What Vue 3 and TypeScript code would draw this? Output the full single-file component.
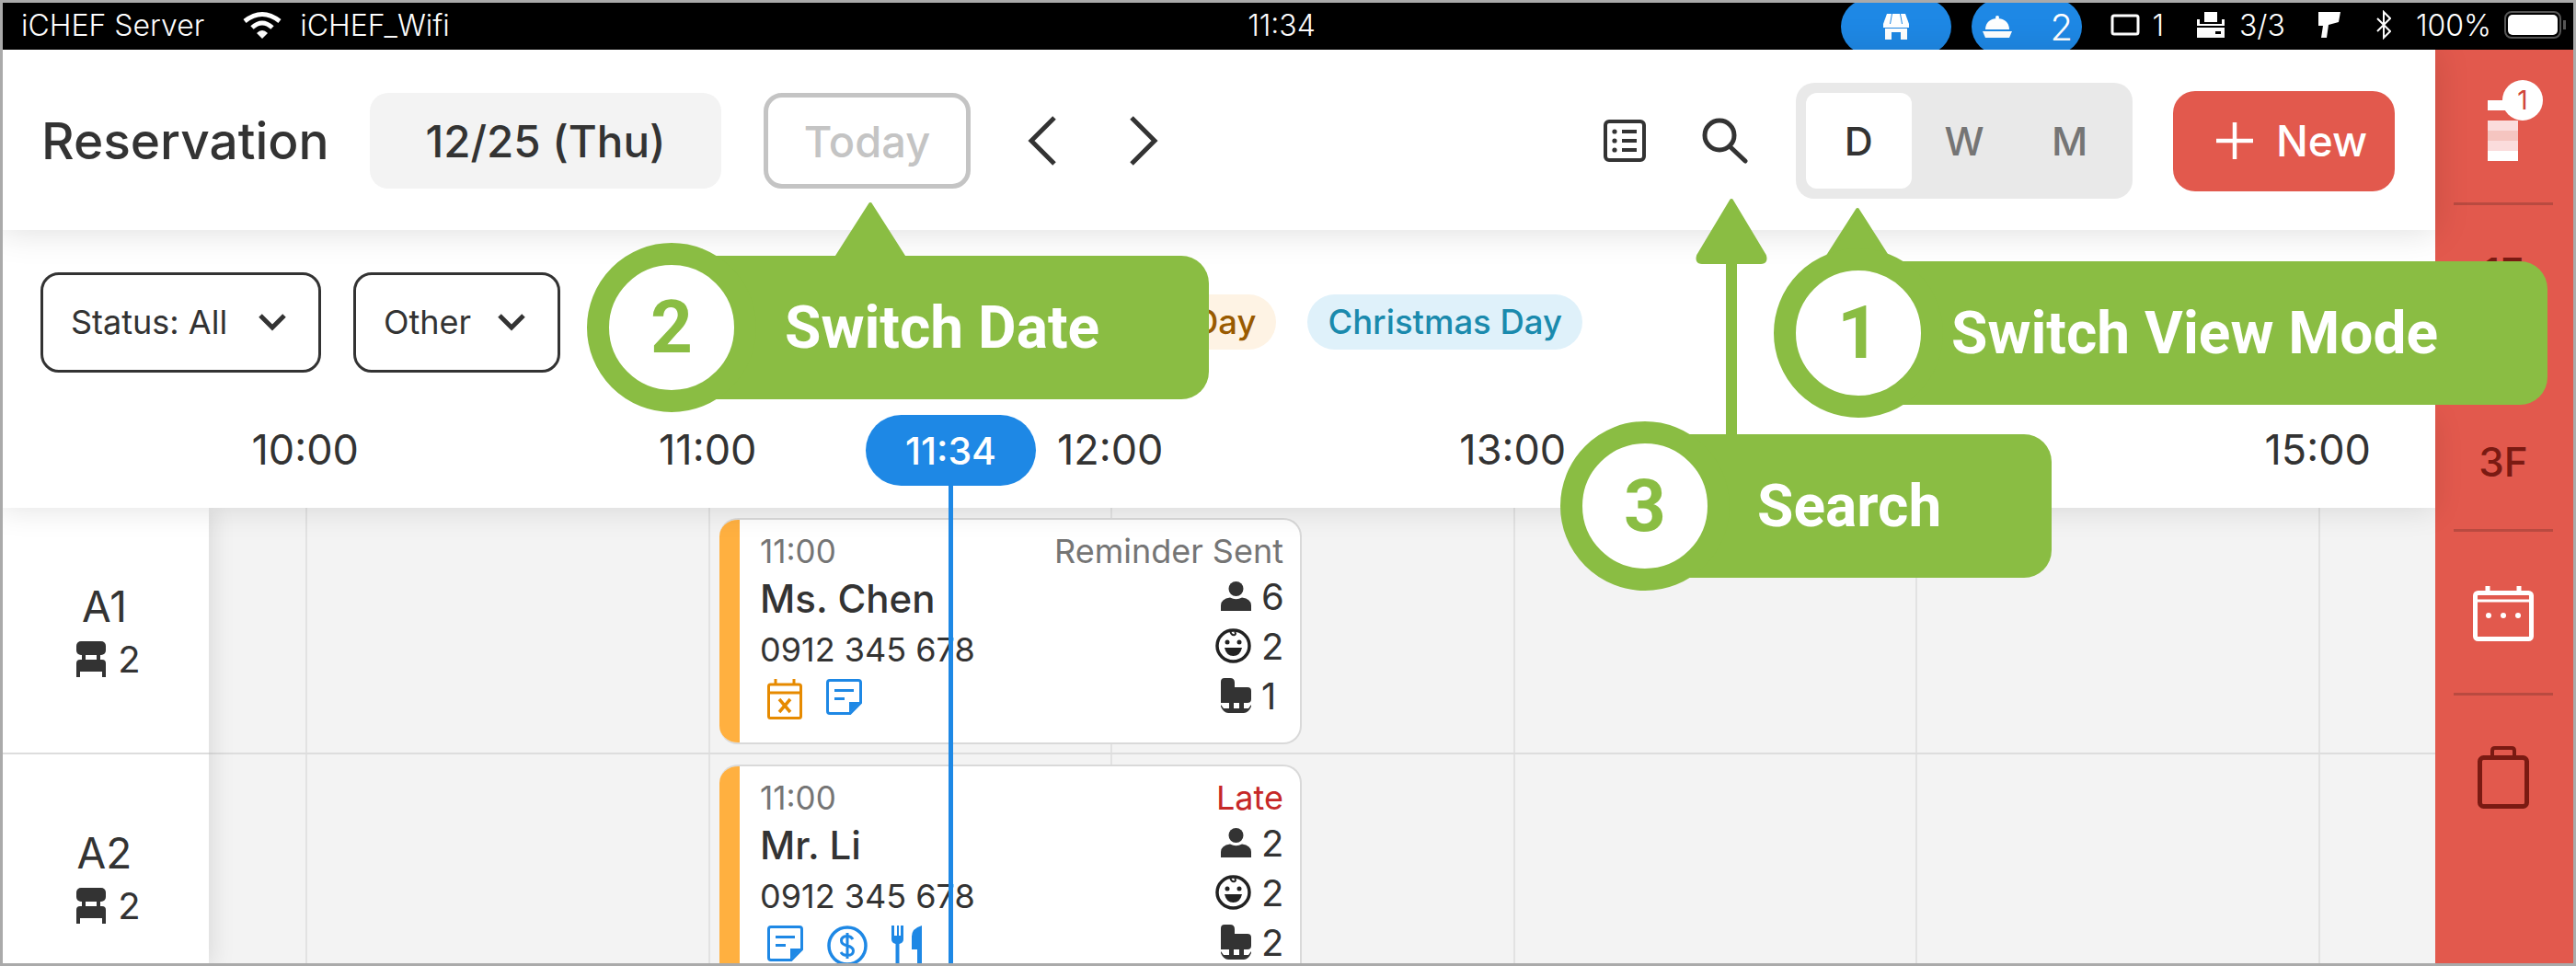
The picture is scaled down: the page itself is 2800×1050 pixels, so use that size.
<template>
  <div class="device">
    <div class="status-bar">
      <div class="status-left">
        <span>iCHEF Server</span>
        <svg class="wifi" width="44" height="30" viewBox="0 0 44 30">
          <path d="M3 11 Q22 -4 41 11" fill="none" stroke="#fff" stroke-width="5" />
          <path d="M11 18 Q22 8 33 18" fill="none" stroke="#fff" stroke-width="5" />
          <path d="M16 24 Q22 18 28 24 L22 30 Z" fill="#fff" />
        </svg>
        <span>iCHEF_Wifi</span>
      </div>
      <span class="status-time">11:34</span>
      <div class="status-right">
        <div class="status-pill store-pill">
          <svg width="28" height="28" viewBox="0 0 28 28" fill="#fff">
            <path d="M4 0H24L28 11H0Z" />
            <rect x="0" y="11" width="28" height="4" />
            <path d="M2 16H26V28H19V20H9V28H2Z" />
            <path d="M9 0H10L8 11H7ZM18 0H19L21 11H20Z" fill="#1e88e5" />
          </svg>
        </div>
        <div class="status-pill bell-pill">
          <svg width="34" height="24" viewBox="0 0 34 24" fill="#fff">
            <circle cx="17" cy="2" r="2" />
            <path d="M4 15C4 7 10 3 17 3S30 7 30 15Z" />
            <path d="M1 17H33L30 24H4Z" />
          </svg>
          <span class="bell-count">2</span>
        </div>
        <svg class="tablet" width="32" height="24" viewBox="0 0 32 24">
          <rect x="2" y="2" width="28" height="20" rx="2" fill="none" stroke="#fff" stroke-width="3" />
        </svg>
        <span class="tablet-count">1</span>
        <svg class="printer" width="30" height="28" viewBox="0 0 30 28" fill="#fff">
          <rect x="8" y="0" width="14" height="11" />
          <path d="M0 8H3V13H27V8H30V15H0Z" />
          <path d="M0 17H30V28H0ZM20 21V24H26V21Z" fill-rule="evenodd" />
        </svg>
        <span class="printer-count">3/3</span>
        <svg class="scanner" width="26" height="28" viewBox="0 0 26 28" fill="#fff">
          <path d="M2 0H26L24 11L13 14L11 28H5L7 15H2Z" />
        </svg>
        <svg class="bluetooth" width="16" height="32" viewBox="0 0 16 32">
          <path d="M1 9L15 23L8 30V2L15 9L1 23" fill="none" stroke="#fff" stroke-width="2" />
        </svg>
        <span class="battery-pct">100%</span>
        <div class="battery"><div class="battery-fill"></div></div>
        <div class="battery-tip"></div>
      </div>
    </div>

    <div class="body">
      <div class="main">
        <header class="top-bar">
          <h1 class="title">Reservation</h1>
          <div class="date-pill">12/25 (Thu)</div>
          <div class="today-btn">Today</div>
          <svg class="chev chev-prev" width="32" height="54" viewBox="0 0 32 54">
            <path d="M29 2L4 27L29 52" fill="none" stroke="#333" stroke-width="5" />
          </svg>
          <svg class="chev chev-next" width="32" height="54" viewBox="0 0 32 54">
            <path d="M3 2L28 27L3 52" fill="none" stroke="#333" stroke-width="5" />
          </svg>
          <div class="top-actions">
            <svg width="46" height="46" viewBox="0 0 46 46">
              <rect x="2" y="2" width="42" height="42" rx="4" fill="none" stroke="#333" stroke-width="4" />
              <g fill="#333">
                <circle cx="12" cy="13" r="2.6" /><rect x="20" y="11" width="16" height="4" />
                <circle cx="12" cy="23" r="2.6" /><rect x="20" y="21" width="16" height="4" />
                <circle cx="12" cy="33" r="2.6" /><rect x="20" y="31" width="16" height="4" />
              </g>
            </svg>
            <svg class="search" width="50" height="50" viewBox="0 0 50 50">
              <circle cx="19" cy="19" r="16" fill="none" stroke="#333" stroke-width="5" />
              <path d="M30 31L47 47" stroke="#333" stroke-width="5" stroke-linecap="round" />
            </svg>
            <div class="segment">
              <div class="seg-item active">D</div>
              <div class="seg-item">W</div>
              <div class="seg-item">M</div>
            </div>
            <div class="new-btn">
              <svg width="40" height="40" viewBox="0 0 40 40">
                <path d="M20 0V40M0 20H40" stroke="#fff" stroke-width="4.5" />
              </svg>
              <span>New</span>
            </div>
          </div>
        </header>

        <div class="filter-row">
          <div class="filter filter-status">
            <span>Status: All</span>
            <svg width="32" height="20" viewBox="0 0 32 20">
              <path d="M3 3L16 16L29 3" fill="none" stroke="#333" stroke-width="5" />
            </svg>
          </div>
          <div class="filter filter-other">
            <span>Other</span>
            <svg width="32" height="20" viewBox="0 0 32 20">
              <path d="M3 3L16 16L29 3" fill="none" stroke="#333" stroke-width="5" />
            </svg>
          </div>
          <div class="holidays">
            <span class="holiday holiday-orange">Constitution Day</span>
            <span class="holiday holiday-blue">Christmas Day</span>
          </div>
        </div>

        <div class="time-row">
          <span v-for="h in hours" :key="h" class="time-label">{{ h }}</span>
        </div>

        <div class="board">
          <div class="tables">
            <div v-for="t in tables" :key="t" class="table-cell">
              <div class="table-name">{{ t }}</div>
              <div class="table-seats">
                <svg width="32" height="39" viewBox="0 0 32 39" fill="#333">
                  <rect x="0" y="0" width="32" height="15" rx="5" />
                  <rect x="6" y="15" width="4" height="6" />
                  <rect x="22" y="15" width="4" height="6" />
                  <path d="M4 20H28Q32 20 32 24V39H28V33H4V39H0V24Q0 20 4 20Z" />
                </svg>
                <span>2</span>
              </div>
            </div>
          </div>
          <div class="slots">
            <div v-for="b in bookings" :key="b.name" class="slot-row">
              <div class="slot-first"></div>
              <div v-for="n in 6" :key="n" class="slot"></div>
              <div class="card">
                <div class="card-stripe"></div>
                <div class="card-left">
                  <div class="card-time">11:00</div>
                  <div class="card-name">{{ b.name }}</div>
                  <div class="card-phone">0912 345 678</div>
                  <div class="card-icons">
                    <template v-for="ic in b.icons" :key="ic">
                      <svg v-if="ic === 'cancel'" width="38" height="44" viewBox="0 0 38 44">
                        <path d="M9 0V6M29 0V6" stroke="#e68a00" stroke-width="3" />
                        <rect x="1.5" y="6" width="35" height="36.5" rx="2" fill="none" stroke="#e68a00" stroke-width="3" />
                        <path d="M2 15H36" stroke="#e68a00" stroke-width="3" />
                        <path d="M13 22L25 36M25 22L13 36" stroke="#e68a00" stroke-width="3.5" />
                      </svg>
                      <svg v-else-if="ic === 'note'" width="39" height="39" viewBox="0 0 39 39">
                        <path d="M4 1.5H35Q37.5 1.5 37.5 4V26L26 37.5H4Q1.5 37.5 1.5 35V4Q1.5 1.5 4 1.5Z" fill="none" stroke="#1e88e5" stroke-width="3" />
                        <path d="M9 11H30V14H9ZM9 20H20V23H9Z" fill="#1e88e5" />
                        <path d="M37 25L25 37V25Z" fill="#1e88e5" />
                      </svg>
                      <svg v-else-if="ic === 'paid'" width="44" height="44" viewBox="0 0 44 44">
                        <circle cx="22" cy="22" r="20" fill="none" stroke="#1e88e5" stroke-width="3.5" />
                        <path d="M28 15Q26 11.5 22 11.5Q15.5 11.5 15.5 16.5Q15.5 20.5 22 22Q28.5 23.5 28.5 27.5Q28.5 32.5 22 32.5Q17 32.5 15 29M22 8V36" fill="none" stroke="#1e88e5" stroke-width="3" />
                      </svg>
                      <svg v-else width="33" height="44" viewBox="0 0 33 44" fill="#1e88e5">
                        <path d="M0 0H3V11H6V0H8V11H10V0H13V15Q13 19 8.5 20V44H4.5V20Q0 19 0 15Z" />
                        <path d="M33 0V44H28V26H22V12Q22 3 33 0Z" />
                      </svg>
                    </template>
                  </div>
                </div>
                <div class="card-right">
                  <div class="card-status" :class="{ late: b.late }">{{ b.status }}</div>
                  <div class="count-row">
                    <svg width="33" height="32" viewBox="0 0 33 32" fill="#333">
                      <circle cx="16.5" cy="8" r="8" />
                      <path d="M0 32V26Q0 19 10 17.5Q16.5 21 23 17.5Q33 19 33 26V32Z" />
                    </svg>
                    <span class="count-num">{{ b.adults }}</span>
                  </div>
                  <div class="count-row">
                    <svg width="39" height="38" viewBox="0 0 39 38">
                      <ellipse cx="19.5" cy="19" rx="17.5" ry="17" fill="none" stroke="#222" stroke-width="3.5" />
                      <path d="M16 2Q17 8 21 7Q23 6 21 4" fill="none" stroke="#222" stroke-width="2" />
                      <circle cx="13" cy="15" r="2.5" fill="#222" />
                      <circle cx="26" cy="15" r="2.5" fill="#222" />
                      <path d="M10 21H29Q27 30 19.5 30T10 21Z" fill="#222" />
                    </svg>
                    <span class="count-num">{{ b.kids }}</span>
                  </div>
                  <div class="count-row">
                    <svg width="33" height="38" viewBox="0 0 33 38" fill="#333">
                      <path d="M0 4Q0 0 4 0H10Q15 0 15 5V10H29Q33 10 33 14V23Q33 27 29 27H0Z" />
                      <path d="M9 27H14V33H20V27H25V33H30L33 29V31Q30 38 25 38H8Q3 38 0 31V29L3 33H9Z" />
                    </svg>
                    <span class="count-num">{{ b.chairs }}</span>
                  </div>
                </div>
              </div>
            </div>
          </div>
        </div>
      </div>

      <aside class="side">
        <div class="side-top">
          <div class="stack">
            <div class="stack-bar"></div>
            <div class="stack-block">
              <i class="s1"></i><i class="s2"></i><i class="s1"></i><i class="s3"></i>
            </div>
            <div class="stack-badge">1</div>
          </div>
        </div>
        <div class="side-floors">
          <div v-for="f in floors" :key="f" class="floor">{{ f }}</div>
        </div>
        <div class="side-item side-calendar">
          <svg width="66" height="60" viewBox="0 0 66 60">
            <path d="M16 0V8M50 0V8" stroke="#fff" stroke-width="5" />
            <rect x="2.5" y="7.5" width="61" height="50" rx="3" fill="none" stroke="#fff" stroke-width="5" />
            <path d="M3 16H63" stroke="#fff" stroke-width="3" />
            <circle cx="17" cy="32" r="3" fill="#fff" />
            <circle cx="33" cy="32" r="3" fill="#fff" />
            <circle cx="49" cy="32" r="3" fill="#fff" />
          </svg>
        </div>
        <div class="side-item side-case">
          <svg width="56" height="68" viewBox="0 0 56 68">
            <path d="M16 12V5Q16 2 19 2H37Q40 2 40 5V12" fill="none" stroke="#7a1a12" stroke-width="4" />
            <rect x="2.5" y="12.5" width="51" height="53" rx="4" fill="none" stroke="#7a1a12" stroke-width="5" />
          </svg>
        </div>
      </aside>
    </div>

    <!-- current time marker -->
    <div class="now-line"></div>
    <div class="now-pill">11:34</div>

    <!-- tutorial callouts -->
    <svg class="pointer pointer-date" width="82" height="66" viewBox="0 0 82 66">
      <path d="M41 6L78 64H4Z" fill="#8abd43" stroke="#8abd43" stroke-width="4" stroke-linejoin="round" />
    </svg>
    <svg class="pointer pointer-view" width="82" height="66" viewBox="0 0 82 66">
      <path d="M41 6L78 64H4Z" fill="#8abd43" stroke="#8abd43" stroke-width="4" stroke-linejoin="round" />
    </svg>
    <svg class="pointer pointer-search" width="84" height="260" viewBox="0 0 84 260">
      <path d="M42 6L78 66Q80 73 74 73H10Q4 73 6 66Z" fill="#8abd43" stroke="#8abd43" stroke-width="4" stroke-linejoin="round" />
      <rect x="36" y="70" width="12" height="190" fill="#8abd43" />
    </svg>
    <div class="callout callout-date">
      <div class="callout-num">2</div>
      <span class="callout-text">Switch Date</span>
    </div>
    <div class="callout callout-view">
      <div class="callout-num">1</div>
      <span class="callout-text">Switch View Mode</span>
    </div>
    <div class="callout callout-search">
      <div class="callout-num">3</div>
      <span class="callout-text">Search</span>
    </div>
  </div>
</template>

<script setup lang="ts">
interface Booking {
  name: string
  status: string
  late: boolean
  adults: number
  kids: number
  chairs: number
  icons: string[]
}

const hours: string[] = ['10:00', '11:00', '12:00', '13:00', '14:00', '15:00']
const tables: string[] = ['A1', 'A2']
const floors: string[] = ['1F', '2F', '3F']

const bookings: Booking[] = [
  { name: 'Ms. Chen', status: 'Reminder Sent', late: false, adults: 6, kids: 2, chairs: 1, icons: ['cancel', 'note'] },
  { name: 'Mr. Li', status: 'Late', late: true, adults: 2, kids: 2, chairs: 2, icons: ['note', 'paid', 'meal'] }
]
</script>

<style>
html,
body {
  margin: 0;
  background: #fff;
}
</style>

<style scoped>
.device {
  position: relative;
  width: 2800px;
  height: 1050px;
  overflow: hidden;
  display: flex;
  flex-direction: column;
  background: #fff;
  color: #333;
  font-family: Inter, Roboto, sans-serif;
}
.device::after {
  content: "";
  position: absolute;
  inset: 0;
  border: 3px solid #aaa;
  pointer-events: none;
  z-index: 20;
}

.status-bar {
  flex: 0 0 54px;
  background: #000;
  color: #fff;
  display: grid;
  grid-template-columns: 1fr auto 1fr;
  align-items: center;
  font-size: 32px;
  font-weight: 300;
  padding: 0 11px 0 23px;
  overflow: hidden;
}
.status-left {
  display: flex;
  align-items: center;
}
.wifi {
  margin: 0 19px 0 41px;
}
.status-time {
  margin-right: 26px;
}
.status-right {
  display: flex;
  align-items: center;
  justify-content: flex-end;
  height: 54px;
}
.status-pill {
  width: 120px;
  height: 60px;
  margin-top: 4px;
  background: #1e88e5;
  border-radius: 30px;
  display: flex;
  align-items: center;
  box-sizing: border-box;
}
.store-pill {
  justify-content: center;
}
.bell-pill {
  margin-left: 22px;
  padding-left: 11px;
}
.bell-count {
  font-size: 40px;
  font-weight: 300;
  margin-left: 40px;
}
.tablet {
  margin-left: 31px;
}
.tablet-count {
  margin-left: 13px;
}
.printer {
  margin-left: 36px;
}
.printer-count {
  margin-left: 16px;
}
.scanner {
  margin-left: 34px;
}
.bluetooth {
  margin-left: 39px;
}
.battery-pct {
  margin-left: 27px;
}
.battery {
  width: 62px;
  height: 30px;
  margin-left: 14px;
  border: 2px solid #555;
  border-radius: 8px;
  padding: 2px;
  box-sizing: border-box;
}
.battery-fill {
  height: 100%;
  background: #fff;
  border-radius: 5px;
}
.battery-tip {
  width: 3px;
  height: 10px;
  margin-left: 2px;
  background: #555;
}

.body {
  flex: 1;
  min-height: 0;
  display: flex;
}
.main {
  width: 2647px;
  display: flex;
  flex-direction: column;
  min-height: 0;
}

.top-bar {
  flex: 0 0 196px;
  box-sizing: border-box;
  display: flex;
  align-items: center;
  padding: 2px 44px 0 45px;
  background: #fff;
  box-shadow: 0 2px 36px rgba(0, 0, 0, 0.13);
  position: relative;
  z-index: 4;
}
.title {
  margin: 0;
  width: 357px;
  font-size: 55px;
  font-weight: 500;
  color: #333;
}
.date-pill {
  width: 382px;
  height: 104px;
  background: #f3f3f3;
  border-radius: 20px;
  display: flex;
  align-items: center;
  justify-content: center;
  font-size: 47.5px;
  font-weight: 500;
}
.today-btn {
  width: 225px;
  height: 104px;
  margin-left: 46px;
  box-sizing: border-box;
  border: 5px solid #c4c4c4;
  border-radius: 20px;
  display: flex;
  align-items: center;
  justify-content: center;
  font-size: 47px;
  font-weight: 500;
  color: #c4c4c4;
}
.chev-prev {
  margin-left: 62px;
}
.chev-next {
  margin-left: 78px;
}
.top-actions {
  margin-left: auto;
  display: flex;
  align-items: center;
}
.search {
  margin-left: 61px;
}
.segment {
  margin-left: 52px;
  width: 366px;
  height: 126px;
  box-sizing: border-box;
  padding: 11px;
  background: #e9e9e9;
  border-radius: 20px;
  display: flex;
}
.seg-item {
  flex: 1;
  display: flex;
  align-items: center;
  justify-content: center;
  font-size: 43px;
  font-weight: 500;
  color: #757575;
  border-radius: 12px;
}
.seg-item.active {
  background: #fff;
  color: #333;
}
.new-btn {
  margin-left: 44px;
  width: 241px;
  height: 109px;
  box-sizing: border-box;
  padding-left: 47px;
  background: #e2594d;
  border-radius: 24px;
  display: flex;
  align-items: center;
  gap: 25px;
  color: #fff;
  font-size: 46px;
  font-weight: 500;
}

.filter-row {
  flex: 0 0 200px;
  display: flex;
  align-items: center;
  padding-left: 44px;
  gap: 35px;
  background: #fff;
  position: relative;
  z-index: 3;
}
.filter {
  height: 109px;
  box-sizing: border-box;
  border: 3px solid #333;
  border-radius: 20px;
  display: flex;
  align-items: center;
  justify-content: space-between;
  font-size: 36px;
  padding: 0 34px 0 30px;
}
.filter-status {
  width: 305px;
}
.filter-other {
  width: 225px;
}
.holidays {
  margin-left: auto;
  margin-right: 927px;
  display: flex;
  gap: 34px;
}
.holiday {
  height: 60px;
  padding: 0 22px;
  border-radius: 30px;
  display: flex;
  align-items: center;
  font-size: 36.5px;
  font-weight: 500;
}
.holiday-orange {
  background: #fef3e4;
  color: #995a00;
}
.holiday-blue {
  background: #dff1fa;
  color: #1a8aad;
}

.time-row {
  flex: 0 0 102px;
  box-sizing: border-box;
  display: flex;
  padding: 0 0 24px 113px;
  position: relative;
  z-index: 2;
  background: #fff;
  box-shadow: 0 4px 30px rgba(0, 0, 0, 0.1);
}
.time-label {
  flex: none;
  width: 437.5px;
  text-align: center;
  font-size: 45px;
  line-height: 78px;
}

.board {
  flex: 1;
  min-height: 0;
  display: flex;
  overflow: hidden;
}
.tables {
  width: 227px;
  flex: none;
  background: #fff;
  position: relative;
  z-index: 1;
  box-shadow: 4px 0 24px rgba(0, 0, 0, 0.1);
}
.table-cell {
  height: 184px;
  padding-top: 82px;
  border-bottom: 2px solid #ddd;
  display: flex;
  flex-direction: column;
  align-items: center;
}
.table-name {
  font-size: 46px;
  line-height: 54px;
  margin-top: -2px;
}
.table-seats {
  display: flex;
  align-items: center;
  gap: 13px;
  font-size: 40px;
  margin: 6px 0 0 9px;
}
.slots {
  flex: 1;
  background: #f3f3f3;
}
.slot-row {
  position: relative;
  height: 266px;
  border-bottom: 2px solid #ddd;
  display: flex;
}
.slot-first {
  width: 105px;
  flex: none;
}
.slot {
  width: 437.5px;
  flex: none;
  box-sizing: border-box;
  border-left: 2px solid #e2e2e2;
}
.card {
  position: absolute;
  left: 555px;
  top: 11px;
  width: 633px;
  height: 246px;
  box-sizing: border-box;
  display: flex;
  background: #fff;
  border: 2.5px solid #d9d9d9;
  border-left: 0;
  border-radius: 20px;
  overflow: hidden;
}
.card-stripe {
  width: 22px;
  flex: none;
  background: #ffb040;
}
.card-left {
  flex: 1;
  padding: 12px 0 0 22px;
}
.card-time {
  font-size: 35px;
  line-height: 44px;
  color: #757575;
}
.card-name {
  font-size: 42px;
  line-height: 52px;
  font-weight: 500;
  margin-top: 4px;
}
.card-phone {
  font-size: 36px;
  line-height: 44px;
  margin-top: 7px;
}
.card-icons {
  display: flex;
  align-items: flex-start;
  gap: 26px;
  margin: 10px 0 0 8px;
}
.card-right {
  padding: 12px 18px 0 0;
  display: flex;
  flex-direction: column;
  align-items: flex-end;
}
.card-status {
  font-size: 36px;
  line-height: 44px;
  color: #757575;
}
.card-status.late {
  color: #c62828;
}
.count-row {
  display: flex;
  align-items: center;
  justify-content: flex-end;
  gap: 11px;
  height: 54px;
  font-size: 40px;
}
.count-num {
  width: 24px;
}

.side {
  flex: 1;
  background: #e2594d;
  display: flex;
  flex-direction: column;
  padding-right: 5px;
  box-sizing: border-box;
}
.side-top {
  height: 166px;
  flex: none;
  display: flex;
  justify-content: center;
  padding-top: 55px;
  box-sizing: border-box;
}
.stack {
  position: relative;
  width: 33px;
  margin-right: 1px;
}
.stack-bar {
  height: 11px;
  width: 33px;
  background: #fff;
}
.stack-block {
  margin-top: 11px;
  display: flex;
  flex-direction: column;
}
.stack-block i {
  display: block;
  height: 11px;
}
.s1 {
  background: #fbdcdc;
}
.s2 {
  background: #f5c5c0;
}
.s3 {
  background: #fff;
}
.stack-badge {
  position: absolute;
  left: 16px;
  top: -22px;
  width: 44px;
  height: 44px;
  border-radius: 50%;
  background: #fff;
  color: #d0463a;
  font-size: 28px;
  display: flex;
  align-items: center;
  justify-content: center;
}
.side-floors {
  height: 358px;
  flex: none;
  margin: 0 20px;
  border-top: 3px solid #b94a40;
  border-bottom: 3px solid #b94a40;
  box-sizing: border-box;
  display: flex;
  flex-direction: column;
  justify-content: center;
}
.floor {
  height: 103px;
  display: flex;
  align-items: center;
  justify-content: center;
  font-size: 44px;
  color: #7a1a12;
  font-weight: 500;
}
.side-item {
  height: 178px;
  flex: none;
  margin: 0 20px;
  box-sizing: border-box;
  display: flex;
  justify-content: center;
}
.side-calendar {
  border-bottom: 3px solid #b94a40;
  padding-top: 59px;
}
.side-case {
  padding-top: 55px;
}

.now-line {
  position: absolute;
  left: 1031px;
  top: 528px;
  bottom: 0;
  width: 5px;
  background: #1e88e5;
  z-index: 4;
}
.now-pill {
  position: absolute;
  left: 941px;
  top: 451px;
  width: 185px;
  height: 77px;
  border-radius: 39px;
  background: #1e88e5;
  color: #fff;
  font-size: 41px;
  font-weight: 500;
  display: flex;
  align-items: center;
  justify-content: center;
  z-index: 4;
}

.pointer {
  position: absolute;
  z-index: 5;
}
.pointer-date {
  left: 905px;
  top: 216px;
}
.pointer-view {
  left: 1978px;
  top: 222px;
}
.pointer-search {
  left: 1840px;
  top: 212px;
}
.callout {
  position: absolute;
  z-index: 6;
  height: 156px;
  background: #8abd43;
  border-radius: 0 30px 30px 0;
  display: flex;
  align-items: center;
  box-sizing: border-box;
  color: #fff;
  font-family: Roboto, sans-serif;
  font-size: 64px;
  font-weight: 700;
}
.callout-num {
  position: absolute;
  left: -92px;
  top: -14px;
  width: 184px;
  height: 184px;
  box-sizing: border-box;
  border: 24px solid #8abd43;
  border-radius: 50%;
  background: #fff;
  color: #8abd43;
  font-size: 80px;
  display: flex;
  align-items: center;
  justify-content: center;
}
.callout-date {
  left: 730px;
  top: 278px;
  width: 584px;
  padding-left: 123px;
}
.callout-view {
  left: 2020px;
  top: 284px;
  width: 749px;
  padding-left: 101px;
}
.callout-search {
  left: 1788px;
  top: 472px;
  width: 442px;
  padding-left: 122px;
}
</style>
